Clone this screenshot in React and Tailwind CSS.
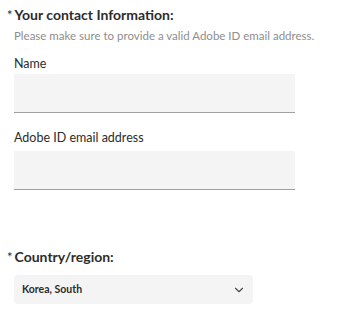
import React from 'react';
import { ChevronDown } from 'lucide-react';

function Field({ label, className }) {
  return (
    <div className={`flex flex-col ${className}`}>
      <label className="text-[12.5px] text-[#2c2c2c] leading-[16px]">{label}</label>
      <div className="h-[39px] w-[281px] bg-[#f4f4f4] border-b border-[#a0a0a0]" />
    </div>
  );
}

function Heading({ children, className }) {
  return (
    <h2 className={`text-[14px] font-bold leading-[18px] -ml-[7px] flex items-start text-[#2c2c2c] ${className}`}>
      <span className="text-[13px] leading-[13px] mt-[3px] mr-[2px] font-normal">*</span>
      {children}
    </h2>
  );
}

export default function App() {
  return (
    <div className="w-[337px] h-[318px] bg-white px-[14px] pt-[6px] font-['Lato',sans-serif] text-[#2c2c2c] overflow-hidden">
      <Heading>Your contact Information:</Heading>
      <p className="text-[11.5px] text-[#8e8e8e] mt-[4px] leading-[15px] whitespace-nowrap">
        Please make sure to provide a valid Adobe ID email address.
      </p>
      <Field label="Name" className="mt-[13px] gap-[2px]" />
      <Field label="Adobe ID email address" className="mt-[17px] gap-[5px]" />
      <Heading className="mt-[58px]">Country/region:</Heading>
      <button className="mt-[9px] h-[29px] w-[239px] rounded-[4px] bg-[#f4f4f4] flex items-center justify-between pl-[8px] pr-[7px] text-[10.5px] font-bold text-[#2c2c2c]">
        Korea, South
        <ChevronDown className="w-[14px] h-[14px] text-[#4a4a4a]" strokeWidth={2} />
      </button>
    </div>
  );
}
